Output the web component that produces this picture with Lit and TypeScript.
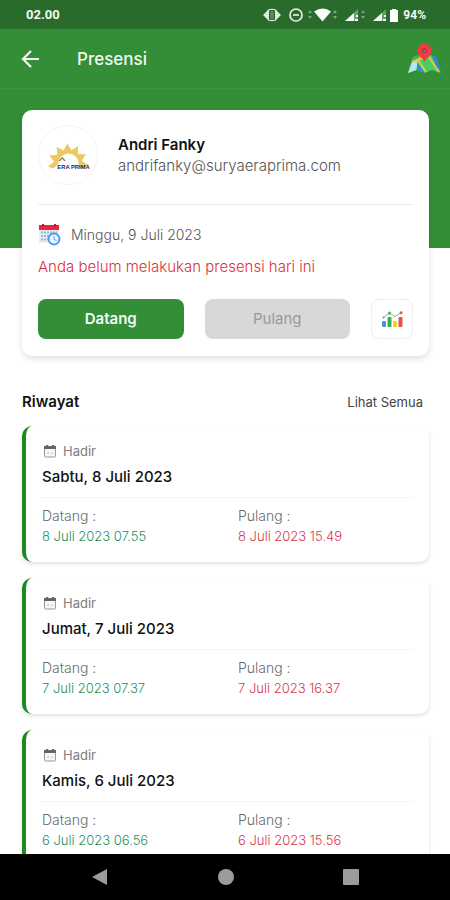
import { LitElement, html, css, svg } from "lit";
import { customElement, property } from "lit/decorators.js";

interface Attendance {
  day: string;
  arrive: string;
  leave: string;
}

const HISTORY: Attendance[] = [
  { day: "Sabtu, 8 Juli 2023", arrive: "8 Juli 2023 07.55", leave: "8 Juli 2023 15.49" },
  { day: "Jumat, 7 Juli 2023", arrive: "7 Juli 2023 07.37", leave: "7 Juli 2023 16.37" },
  { day: "Kamis, 6 Juli 2023", arrive: "6 Juli 2023 06.56", leave: "6 Juli 2023 15.56" },
];

const RAYS = Array.from({ length: 7 }, (_, i) => 172 + i * 32);

@customElement("status-bar")
export class StatusBar extends LitElement {
  static styles = css`
    :host {
      display: flex;
      align-items: center;
      justify-content: space-between;
      height: 29px;
      padding: 0 24px 0 26px;
      background: #296b2b;
      color: #f4f8f4;
      font: 700 12px/16px Roboto, sans-serif;
    }
    .time {
      font-size: 13px;
    }
    .right {
      display: flex;
      align-items: center;
      gap: 4px;
    }
    svg {
      display: block;
    }
  `;
  render() {
    return html`
      <span class="time">02.00</span>
      <span class="right">
        <svg width="136" height="18" viewBox="0 0 136 18" aria-hidden="true">
          <path d="M0 9 4 5 5 3.500Q9 2 13 3.500L14 5 18 9 14 13 13 14.500Q9 16 5 14.500L4 13Z" fill="#dfeadf" />
          <rect x="6" y="4" width="6" height="10" rx="1" fill="#296b2b" />
          <rect x="7.500" y="5" width="3" height="8" fill="#5b8f5d" />
          <circle cx="33" cy="9" r="6" fill="none" stroke="#e9f1e9" stroke-width="1.700" />
          <path d="M30 9h6" stroke="#e9f1e9" stroke-width="1.700" />
          <g fill="#7ea67f">
            <path d="m47 4 2 3h-4zM47 13l2-3h-4zM72 4l2 3h-4zM72 13l2-3h-4zM100 4l2 3h-4zM100 13l2-3h-4z" />
          </g>
          <path d="M51 5.500Q60 -0.500 68 5.500L59.500 15.500Z" fill="#fff" />
          <path d="M95 3v12H82z" fill="#6d9b6e" />
          <path d="M91 7v8h-9zM93 9h2v2h-2zM92 13h3v2h-3z" fill="#f4f8f4" />
          <path d="M123 3v12h-13z" fill="#6d9b6e" />
          <path d="M119 7v8h-9zM121 9h2v2h-2zM120 13h3v2h-3z" fill="#f4f8f4" />
          <path d="M127 4h2V3h4v1h2v12h-8z" fill="#fff" />
        </svg>
        <span>94%</span>
      </span>
    `;
  }
}

@customElement("history-card")
export class HistoryCard extends LitElement {
  @property({ attribute: false }) entry!: Attendance;

  static styles = css`
    :host {
      display: block;
      padding: 16px 16px 15px;
      border-left: 4px solid #1e8a22;
      border-radius: 10px;
      background: #fff;
      box-shadow: 0 2px 4px rgba(0, 0, 0, 0.12);
    }
    .status {
      display: flex;
      align-items: center;
      gap: 6px;
      font-size: 13px;
      line-height: 18px;
      color: #7c7c7c;
    }
    svg {
      display: block;
      margin-left: 1px;
    }
    h3 {
      margin: 5px 0 8px;
      font-size: 15px;
      font-weight: 500;
      line-height: 24px;
      color: #111;
    }
    dl {
      display: grid;
      grid-template-columns: 1fr 1fr;
      column-gap: 21px;
      margin: 0;
      padding-top: 7px;
      border-top: 1px solid #f3f3f3;
      font-size: 14px;
      font-weight: 300;
      line-height: 21px;
    }
    dt {
      color: #6c6c6c;
    }
    dd {
      margin: 0;
      font-size: 13px;
    }
    .in {
      color: #258f5e;
    }
    .out {
      color: #d93648;
    }
  `;
  render() {
    return html`
      <div class="status">
        <svg width="14" height="14" viewBox="0 0 14 14" aria-hidden="true">
          <rect x="1.500" y="2.500" width="11" height="10.500" rx="1" fill="#f7f7f7" stroke="#9a9a9a" />
          <path d="M1 2h12v3H1zM3 1h2v2H3zM9 1h2v2H9z" fill="#666" />
          <path d="M4 9h2M8 9h2" stroke="#bbb" />
        </svg>
        <span>Hadir</span>
      </div>
      <h3>${this.entry.day}</h3>
      <dl>
        <div>
          <dt>Datang :</dt>
          <dd class="in">${this.entry.arrive}</dd>
        </div>
        <div>
          <dt>Pulang :</dt>
          <dd class="out">${this.entry.leave}</dd>
        </div>
      </dl>
    `;
  }
}

@customElement("app-root")
export class AppRoot extends LitElement {
  static styles = css`
    :host {
      display: flex;
      flex-direction: column;
      height: 100vh;
      overflow: hidden;
      background: #fff;
      color: #111;
      font: 400 14px/20px Inter, sans-serif;
    }
    status-bar,
    header,
    nav {
      flex: none;
    }
    button {
      padding: 0;
      border: 0;
      background: none;
      color: inherit;
      font: inherit;
      cursor: pointer;
    }
    svg {
      display: block;
    }
    header {
      display: flex;
      align-items: center;
      height: 60px;
      box-sizing: border-box;
      padding: 0 9px 0 20px;
      border-bottom: 1px solid #3c9441;
      background: #348e37;
      color: #f2f8f2;
    }
    h1 {
      flex: 1;
      margin: 0 0 0 36px;
      font-size: 17px;
      font-weight: 500;
      line-height: 24px;
    }
    main {
      flex: 1;
      min-height: 0;
      overflow: hidden;
      padding: 21px 21px 0 22px;
      background: linear-gradient(#348e37, #348e37) no-repeat 0 0 / 100% 159px;
    }
    .today {
      padding: 15px 16px 17px;
      border-radius: 10px;
      background: #fff;
      box-shadow: 0 3px 6px rgba(0, 0, 0, 0.12);
    }
    .profile {
      display: flex;
      align-items: center;
      gap: 20px;
      padding-bottom: 19px;
      border-bottom: 1px solid #eee;
    }
    .avatar {
      flex: none;
      box-sizing: border-box;
      width: 60px;
      height: 60px;
      border: 1px solid #f3f3f3;
      border-radius: 50%;
    }
    h2 {
      margin: 0;
      font-size: 15px;
      font-weight: 600;
      line-height: 22px;
    }
    p {
      margin: 0;
      font-weight: 300;
      color: #555;
    }
    .email {
      font-size: 15px;
    }
    .date {
      display: flex;
      align-items: center;
      gap: 10px;
      margin-top: 18px;
    }
    .warning {
      margin: 11px 0 22px;
      font-size: 15px;
      color: #dc2f40;
    }
    .actions {
      display: flex;
      gap: 21px;
    }
    .action {
      flex: 1;
      height: 40px;
      border-radius: 8px;
      background: #348e37;
      color: #f4faf4;
      font-size: 15px;
      font-weight: 600;
    }
    .action:disabled {
      background: #d8d8d8;
      color: #989898;
      font-weight: 400;
      cursor: default;
    }
    .chart {
      box-sizing: border-box;
      display: grid;
      place-items: center;
      width: 42px;
      height: 40px;
      border: 1px solid #efefef;
      border-radius: 8px;
    }
    .heading {
      display: flex;
      align-items: center;
      justify-content: space-between;
      margin: 35px 6px 13px 0;
    }
    a {
      color: #444;
      font-size: 13px;
      text-decoration: none;
    }
    .list {
      display: grid;
      gap: 16px;
    }
    nav {
      display: flex;
      align-items: center;
      justify-content: space-between;
      height: 46px;
      padding: 0 90px;
      background: #000;
    }
  `;

  render() {
    return html`
      <status-bar></status-bar>
      <header>
        <button aria-label="Kembali">
          <svg width="21" height="20" viewBox="0 0 21 20" fill="none" stroke="#f4f8f4" stroke-width="2.200">
            <path d="M19 10H3M11 2 3 10l8 8" />
          </svg>
        </button>
        <h1>Presensi</h1>
        <button aria-label="Peta">
          <svg width="33" height="32" viewBox="0 0 33 32">
            <path d="M5 14 11 12 16 14 22 12 28 14 33 30 24 27 17 30 9 27 0 30Z" fill="#46cf62" />
            <path d="M4 19 10 18 8 27 0 30Z" fill="#b4e6f8" />
            <path d="M5 14 11 12 11 16 4 19Z" fill="#37b85a" />
            <path d="M9 19 17 30 9 27Z" fill="#2a91dd" />
            <path d="M24 13 28 14 33 30 29 25Z" fill="#2389e2" />
            <path d="M4 19 11 16 17 15M10 17 18 29M21 14 31 29" fill="none" stroke="#f3c13c" stroke-width="2" />
            <path d="M16.500 19C14 14 9.500 13 9.500 7.500a7 7 0 0 1 14 0c0 5.500-4.500 6.500-7 11.500Z" fill="#f03c45" />
            <circle cx="16.500" cy="7.500" r="2.600" fill="#c02c3c" />
            <circle cx="16.500" cy="8" r="1.200" fill="#5aa05a" />
          </svg>
        </button>
      </header>
      <main>
        <section class="today">
          <div class="profile">
            <svg class="avatar" viewBox="0 0 60 60" role="img" aria-label="Surya Era Prima">
              <g fill="#ecc964">
                ${RAYS.map((a) => svg`<path d="M42 34 42 44 51 39Z" transform="rotate(${a} 30 39)" />`)}
                <circle cx="30" cy="39" r="14" />
              </g>
              <path d="M20 39a10.500 10.500 0 0 1 21 0v14H16V43Z" fill="#fff" />
              <path d="M0 44h60v12H0Z" fill="#fff" />
              <path d="M21 36l3-3 3 3" fill="none" stroke="#776a55" stroke-width="1.200" />
              <text x="19" y="44" font-family="Liberation Sans" font-size="6" font-weight="700" fill="#27235f">ERA PRIMA</text>
            </svg>
            <div>
              <h2>Andri Fanky</h2>
              <p class="email">andrifanky@suryaeraprima.com</p>
            </div>
          </div>
          <div class="date">
            <svg width="23" height="23" viewBox="0 0 23 23" aria-hidden="true">
              <path d="M1 4h20v16H1z" fill="#e8eef6" />
              <path d="M3 9.500h16M3 13h10M3 16.500h8" stroke="#9fb4d0" stroke-width="2" stroke-dasharray="2 1" />
              <path d="M1 2h20v5H1z" fill="#e92639" />
              <path d="M5 1v3M17 1v3" stroke="#c5172a" stroke-width="2" />
              <circle cx="16" cy="16" r="5.500" fill="#eef7ff" stroke="#4c9df0" stroke-width="2" />
              <path d="M16 13v3.500l2.500 1" fill="none" stroke="#5b9bd8" />
            </svg>
            <p>Minggu, 9 Juli 2023</p>
          </div>
          <p class="warning">Anda belum melakukan presensi hari ini</p>
          <div class="actions">
            <button class="action">Datang</button>
            <button class="action" disabled>Pulang</button>
            <button class="chart" aria-label="Statistik">
              <svg width="21" height="17" viewBox="0 0 21 17">
                <rect x="0" y="10" width="4" height="6" rx="1" fill="#4a90e8" />
                <rect x="5.500" y="6" width="4" height="10" rx="1" fill="#35b24a" />
                <rect x="11" y="10" width="4" height="6" rx="1" fill="#f3d02f" />
                <rect x="16.500" y="6" width="4" height="10" rx="1" fill="#ee4f43" />
                <path d="M1.500 6.500 7.500 2 13 5.500 19 1.800" fill="none" stroke="#8fb0b0" />
                <circle cx="1.500" cy="6.500" r="1" fill="#4a90e8" />
                <circle cx="7.500" cy="2" r="1.500" fill="#35b24a" />
                <circle cx="13" cy="5.500" r="1" fill="#f3d02f" />
                <circle cx="19" cy="1.800" r="1.500" fill="#ee4f43" />
              </svg>
            </button>
          </div>
        </section>
        <div class="heading">
          <h2>Riwayat</h2>
          <a href="#riwayat">Lihat Semua</a>
        </div>
        <section class="list" id="riwayat">
          ${HISTORY.map((entry) => html`<history-card .entry=${entry}></history-card>`)}
        </section>
      </main>
      <nav aria-label="Navigasi sistem">
        <button aria-label="Kembali">
          <svg width="19" height="18" viewBox="0 0 19 18"><path d="M17 1v16L2 9Z" fill="#9c9c9c" /></svg>
        </button>
        <button aria-label="Beranda">
          <svg width="18" height="18" viewBox="0 0 18 18"><circle cx="9" cy="9" r="8" fill="#9c9c9c" /></svg>
        </button>
        <button aria-label="Aplikasi terbaru">
          <svg width="18" height="18" viewBox="0 0 18 18"><rect x="1" y="1" width="16" height="16" rx="1" fill="#9c9c9c" /></svg>
        </button>
      </nav>
    `;
  }
}
